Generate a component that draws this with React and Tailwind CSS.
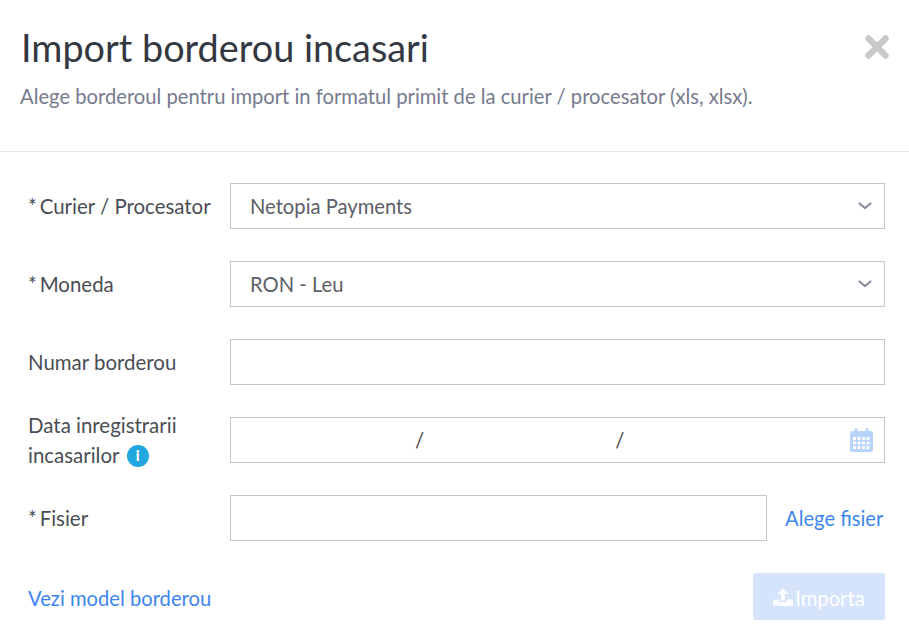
import { X } from 'lucide-react'

function CalendarIcon() {
  return (
    <svg width="23" height="24" viewBox="0 0 23 24" className="text-[#b9d4fb]">
      <path
        fill="currentColor"
        fillRule="evenodd"
        d="M2 3h2.500V1.500a1.500 1.500 0 0 1 3 0V3h8V1.500a1.500 1.500 0 0 1 3 0V3H21a2 2 0 0 1 2 2v17a2 2 0 0 1-2 2H2a2 2 0 0 1-2-2V5a2 2 0 0 1 2-2ZM3 9v3h3V9H3Zm4.500 0v3h3V9h-3ZM12 9v3h3V9h-3Zm4.500 0v3h3V9h-3ZM3 13.500v3h3v-3H3Zm4.500 0v3h3v-3h-3Zm4.500 0v3h3v-3h-3Zm4.500 0v3h3v-3h-3ZM3 18v3h3v-3H3Zm4.500 0v3h3v-3h-3Zm4.500 0v3h3v-3h-3Zm4.500 0v3h3v-3h-3Z"
      />
    </svg>
  )
}

function UploadIcon() {
  return (
    <svg width="20" height="20" viewBox="0 0 20 20" className="text-white/90">
      <path fill="currentColor" d="M10 1 15.500 7H12v6.500H8V7H4.500L10 1Z" />
      <path fill="currentColor" d="M0 13.500a1 1 0 0 1 1-1h5.500v2.500h7v-2.500H19a1 1 0 0 1 1 1V18a1 1 0 0 1-1 1H1a1 1 0 0 1-1-1v-4.500Z" />
    </svg>
  )
}

function Chevron() {
  return (
    <svg width="14" height="8" viewBox="0 0 14 8" className="absolute right-[12px] text-[#8a8e9c]">
      <path d="M1.500 1.500 7 6 12.500 1.500" fill="none" stroke="currentColor" strokeWidth="2.200" strokeLinecap="round" />
    </svg>
  )
}

function Field({ label, required, children }) {
  return (
    <div className="flex h-[46px] items-center">
      <div className="w-[202px] shrink-0 text-[20.45px] leading-[30px] text-[#4a4d54]">
        {required && <span className="mr-[3px]">*</span>}
        {label}
      </div>
      {children}
    </div>
  )
}

function Box({ children, className = 'flex-1' }) {
  return (
    <div className={`${className} relative flex h-[46px] items-center border border-[#c2c6c9] bg-white pl-[19px] pr-4 text-[20.2px] text-[#5d6067]`}>
      {children}
    </div>
  )
}

export default function App() {
  return (
    <div className="h-[634px] w-[909px] overflow-hidden bg-white font-['Lato','Open_Sans',sans-serif]">
      <div className="relative h-[152px] border-b border-[#e8e9ea] pl-[21px] pt-[23px]">
        <h1 className="text-[37.8px] leading-[50px] font-normal text-[#333842]">Import borderou incasari</h1>
        <p className="mt-[9px] -ml-px text-[20.2px] leading-[28px] text-[#767b8e]">
          Alege borderoul pentru import in formatul primit de la curier / procesator (xls, xlsx).
        </p>
        <X size={34} strokeWidth={4.5} className="absolute top-[30px] right-[15px] text-[#c9c9c9]" />
      </div>

      <div className="flex flex-col gap-8 pt-[31px] pr-6 pl-7">
        <Field required label="Curier / Procesator">
          <Box>
            Netopia Payments
            <Chevron />
          </Box>
        </Field>
        <Field required label="Moneda">
          <Box>
            RON - Leu
            <Chevron />
          </Box>
        </Field>
        <Field label="Numar borderou">
          <Box />
        </Field>
        <Field
          label={
            <>
              Data inregistrarii
              <br />
              incasarilor{' '}
              <span className="ml-[2.5px] inline-flex h-[22px] w-[22px] translate-y-[-2px] items-center justify-center rounded-full bg-[#22a7e0] align-baseline text-[15px] leading-none font-black text-white">
                i
              </span>
            </>
          }
        >
          <Box>
            <div className="flex w-full items-center pl-[165px] text-[#4a4d54]">
              <span>/</span>
              <span className="ml-[191px]">/</span>
            </div>
            <div className="absolute right-[11px]">
              <CalendarIcon />
            </div>
          </Box>
        </Field>
        <Field required label="Fisier">
          <Box className="w-[537px]" />
          <span className="ml-[18px] text-[20.2px] text-[#3d86f0]">Alege fisier</span>
        </Field>
      </div>

      <div className="flex items-center justify-between pt-8 pr-6 pl-7">
        <span className="mt-1 text-[20.2px] text-[#3d86f0]">Vezi model borderou</span>
        <button className="flex h-[47px] w-[132px] items-center justify-center gap-[2px] rounded-[3px] bg-[#d5e4fb] text-[20.2px] text-white">
          <UploadIcon />
          <span className="mt-1">Importa</span>
        </button>
      </div>
    </div>
  )
}
